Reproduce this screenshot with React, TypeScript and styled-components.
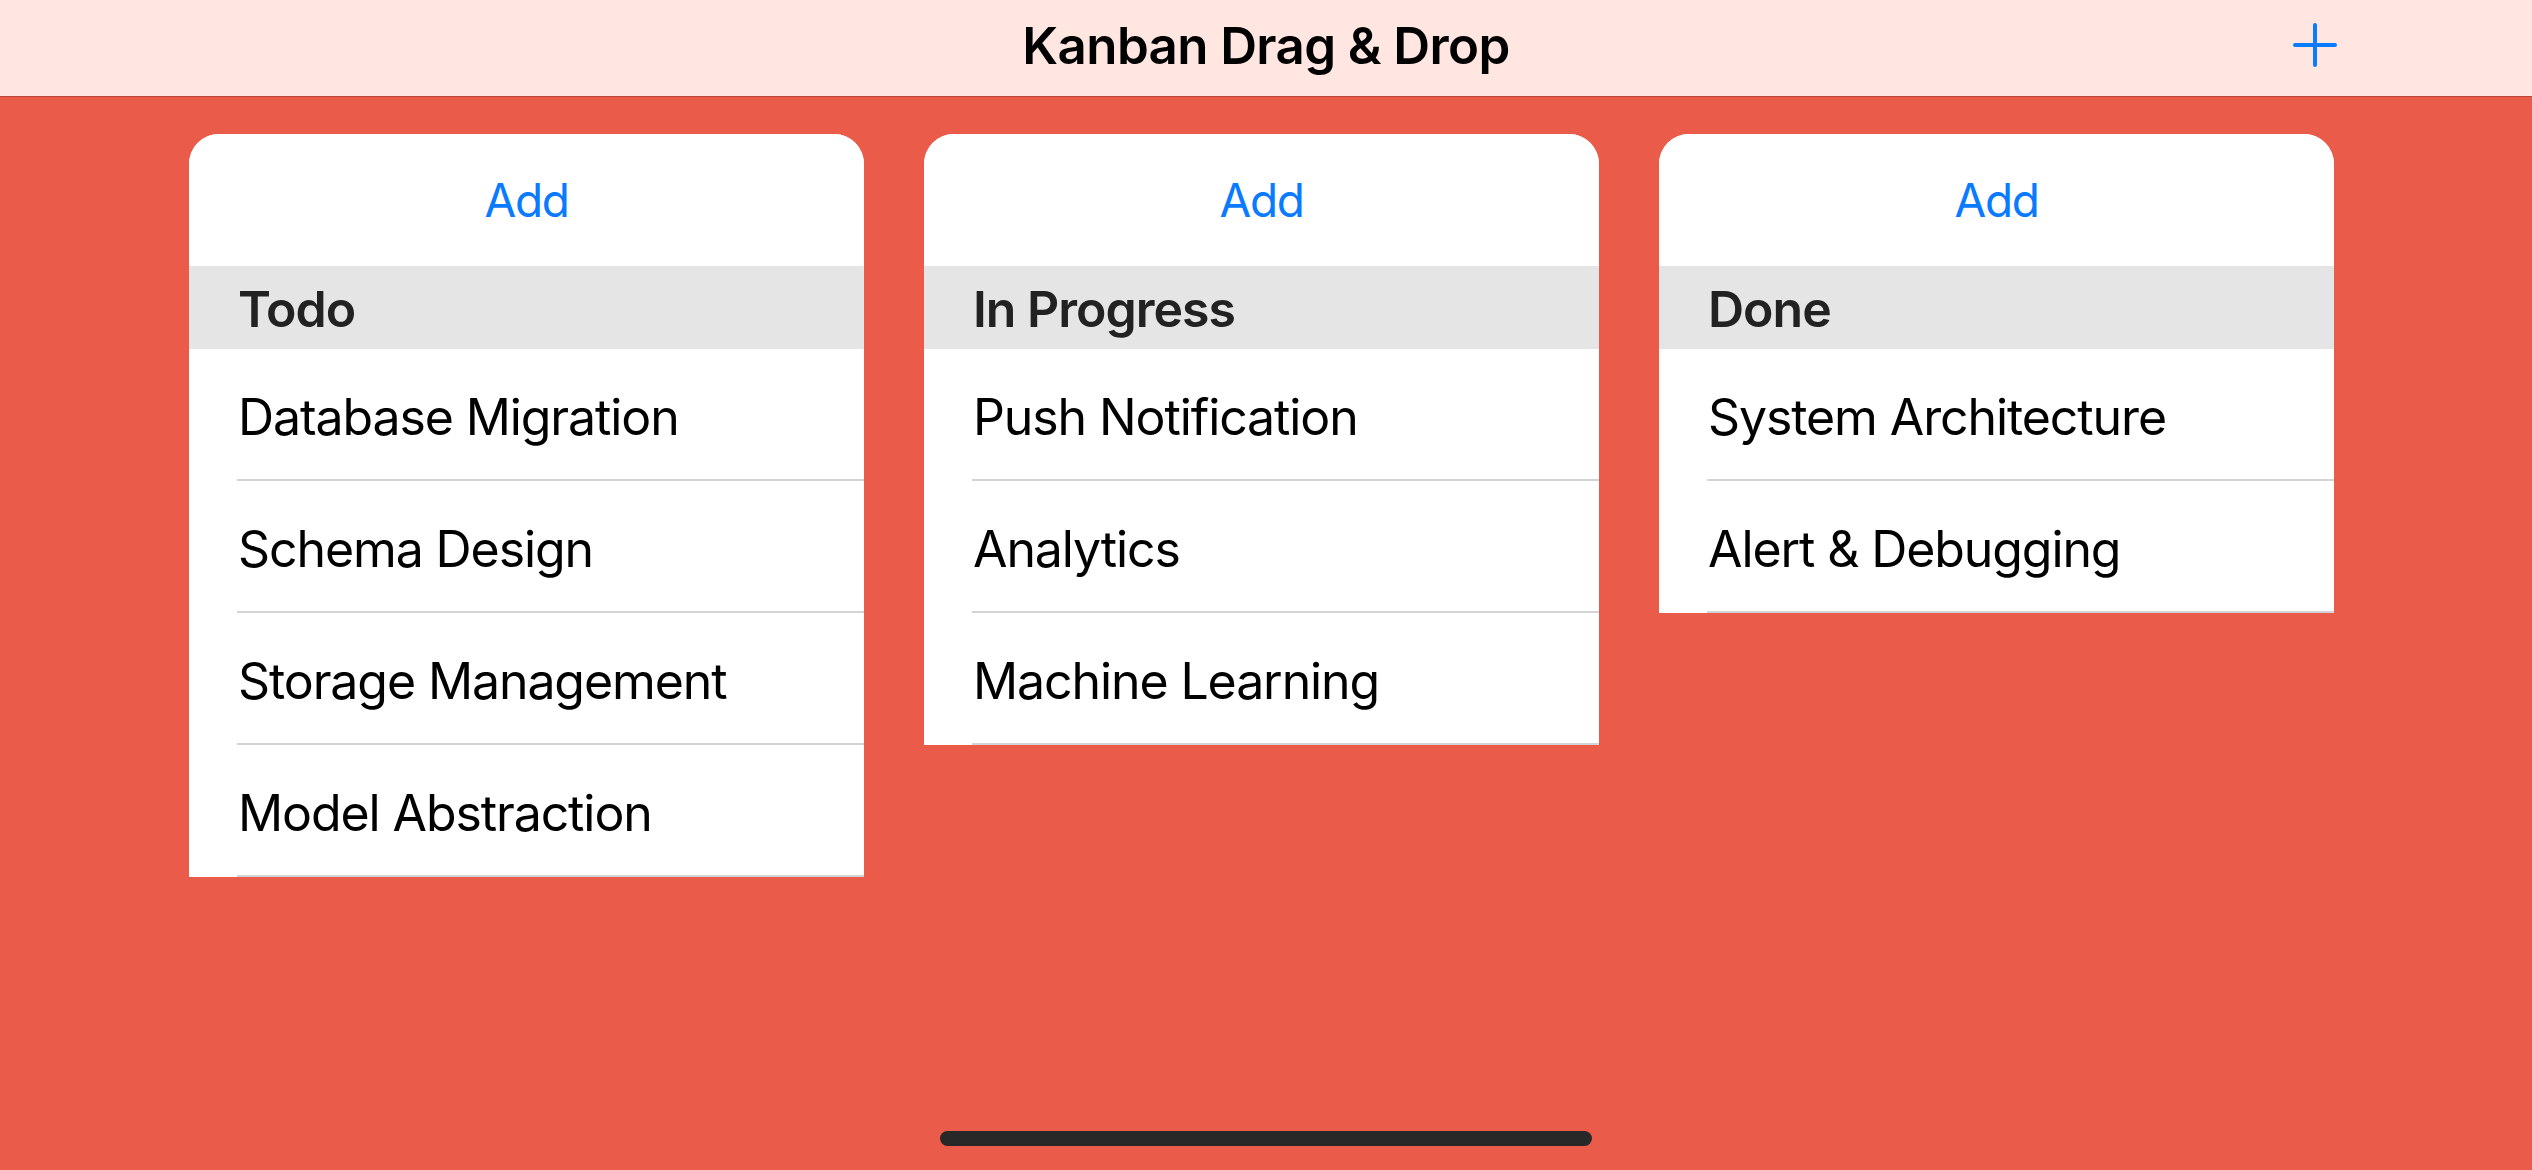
import React from "react";
import styled, { createGlobalStyle } from "styled-components";

const GlobalStyle = createGlobalStyle`
  html, body {
    margin: 0;
    padding: 0;
    background: #eb5b49;
  }
  * { box-sizing: border-box; }
  body {
    font-family: Inter, "Noto Sans", "Liberation Sans", sans-serif;
    -webkit-font-smoothing: antialiased;
  }
`;

const Screen = styled.div`
  width: 2532px;
  height: 1170px;
  display: flex;
  flex-direction: column;
  background: #eb5b49;
  overflow: hidden;
`;

const NavBar = styled.header`
  height: 97px;
  flex: none;
  display: grid;
  grid-template-columns: 1fr auto 1fr;
  align-items: center;
  background: #ffe6e1;
  border-bottom: 1px solid #b9473a;
  padding: 0 0 6px 0;
`;

const Title = styled.h1`
  grid-column: 2;
  margin: 0;
  font-size: 51px;
  font-weight: 600;
  letter-spacing: -0.6px;
  color: #000;
`;

const PlusButton = styled.button`
  grid-column: 3;
  justify-self: end;
  margin-right: 195px;
  width: 44px;
  height: 44px;
  padding: 0;
  border: none;
  background: transparent;
  display: flex;
  align-items: center;
  justify-content: center;
  color: #0a7aff;
`;

const Board = styled.main`
  flex: 1;
  display: flex;
  align-items: flex-start;
  gap: 60px;
  padding: 37px 0 0 189px;
`;

const Column = styled.section`
  width: 675px;
  background: #fff;
  border-radius: 30px 30px 0 0;
  overflow: hidden;
  display: flex;
  flex-direction: column;
`;

const AddButton = styled.button`
  height: 132px;
  border: none;
  background: #fff;
  color: #0a7aff;
  font-family: inherit;
  font-size: 46px;
  font-weight: 400;
  letter-spacing: -1.4px;
  display: flex;
  align-items: center;
  justify-content: center;
  padding: 0;
`;

const SectionHeader = styled.div`
  height: 83px;
  background: #e5e5e5;
  display: flex;
  align-items: center;
  padding: 3px 0 0 49px;
  font-size: 50px;
  font-weight: 600;
  letter-spacing: -1px;
  color: #222;
`;

const Item = styled.div`
  height: 132px;
  padding-left: 48px;
  display: flex;
  background: #fff;
`;

const ItemLabel = styled.div`
  flex: 1;
  display: flex;
  align-items: center;
  padding: 6px 0 0 1px;
  border-bottom: 2px solid #d4d4d6;
  font-size: 50px;
  font-weight: 400;
  letter-spacing: -1.1px;
  color: #000;
`;

const HomeIndicator = styled.div`
  flex: none;
  align-self: center;
  width: 652px;
  height: 15px;
  border-radius: 8px;
  background: #282828;
  margin: 0 0 24px 0;
`;

type ColumnData = { title: string; items: string[] };

const columns: ColumnData[] = [
  {
    title: "Todo",
    items: ["Database Migration", "Schema Design", "Storage Management", "Model Abstraction"],
  },
  {
    title: "In Progress",
    items: ["Push Notification", "Analytics", "Machine Learning"],
  },
  {
    title: "Done",
    items: ["System Architecture", "Alert & Debugging"],
  },
];

const PlusIcon = () => (
  <svg width="44" height="44" viewBox="0 0 44 44" fill="none">
    <path d="M22 2v40M2 22h40" stroke="currentColor" strokeWidth="4" strokeLinecap="round" />
  </svg>
);

export default function App() {
  return (
    <>
      <GlobalStyle />
      <Screen>
        <NavBar>
          <Title>Kanban Drag &amp; Drop</Title>
          <PlusButton aria-label="Add column">
            <PlusIcon />
          </PlusButton>
        </NavBar>
        <Board>
          {columns.map((col) => (
            <Column key={col.title}>
              <AddButton>Add</AddButton>
              <SectionHeader>{col.title}</SectionHeader>
              {col.items.map((item) => (
                <Item key={item}>
                  <ItemLabel>{item}</ItemLabel>
                </Item>
              ))}
            </Column>
          ))}
        </Board>
        <HomeIndicator />
      </Screen>
    </>
  );
}
